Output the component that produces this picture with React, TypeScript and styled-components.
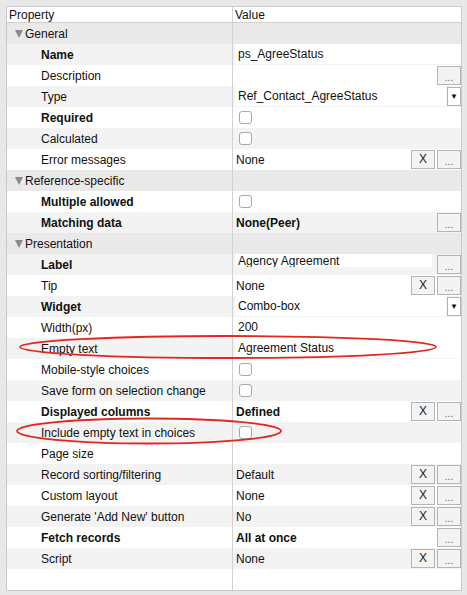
import React from 'react';
import styled, { createGlobalStyle } from 'styled-components';

const GlobalStyle = createGlobalStyle`
  html, body {
    margin: 0;
    padding: 0;
    background: #e8e8e8;
  }
  body {
    font-family: 'Liberation Sans', Arial, sans-serif;
    font-size: 12px;
    color: #111111;
  }
`;

const Page = styled.div`
  position: relative;
  width: 467px;
  height: 595px;
  padding: 6px 0 0 6px;
  box-sizing: border-box;
`;

const Panel = styled.div`
  width: 456px;
  height: 585px;
  box-sizing: border-box;
  border: 1px solid #c9c9c9;
  background: #ffffff;
  display: flex;
  flex-direction: column;
`;

const Line = styled.div<{ $bg?: string; $h?: number }>`
  display: grid;
  grid-template-columns: 226px 1fr;
  height: ${(p) => p.$h ?? 21}px;
  background: ${(p) => p.$bg ?? '#ffffff'};
  flex: none;
`;

const HeadLine = styled(Line)`
  border-bottom: 1px solid #cfcfcf;
`;

const Filler = styled(Line)`
  flex: 1;
  height: auto;
`;

const LeftCell = styled.div<{ $bold?: boolean; $pad?: number }>`
  border-right: 1px solid #d2d2d2;
  padding-left: ${(p) => p.$pad ?? 34}px;
  display: flex;
  align-items: center;
  gap: 2px;
  font-weight: ${(p) => (p.$bold ? 700 : 400)};
  white-space: nowrap;
  overflow: hidden;
`;

const ValueCell = styled.div<{ $pad?: number }>`
  display: flex;
  align-items: center;
  padding-left: ${(p) => p.$pad ?? 0}px;
  min-width: 0;
`;

const ValueText = styled.span<{ $bold?: boolean }>`
  flex: 1;
  padding-left: 3px;
  font-weight: ${(p) => (p.$bold ? 700 : 400)};
  white-space: nowrap;
`;

const Field = styled.div<{ $clipped?: boolean }>`
  flex: 1;
  align-self: ${(p) => (p.$clipped ? 'flex-start' : 'stretch')};
  margin: ${(p) => (p.$clipped ? '0 3px 0 2px' : '0 0 1px 2px')};
  height: ${(p) => (p.$clipped ? '13px' : 'auto')};
  background: #ffffff;
  padding-left: 3px;
  display: flex;
  align-items: ${(p) => (p.$clipped ? 'flex-start' : 'center')};
  line-height: ${(p) => (p.$clipped ? '15px' : '20px')};
  overflow: hidden;
  white-space: nowrap;
`;

const Check = styled.span`
  width: 11px;
  height: 11px;
  margin-left: 6px;
  border: 1px solid #a9a9a9;
  border-radius: 3px;
  background: #ffffff;
`;

const SmallButton = styled.button<{ $dots?: boolean }>`
  width: 24px;
  height: 19px;
  margin-left: 2px;
  padding: 0;
  border: 1px solid #b4b4b4;
  background: #f3f3f3;
  font-family: inherit;
  font-size: ${(p) => (p.$dots ? '10px' : '12px')};
  color: ${(p) => (p.$dots ? '#5a5a7a' : '#222222')};
  line-height: ${(p) => (p.$dots ? '22px' : '17px')};
  text-align: center;
  flex: none;
`;

const SelectArrow = styled.div`
  width: 12px;
  height: 17px;
  margin-left: 1px;
  border: 1px solid #b4b4b4;
  background: #ffffff;
  display: flex;
  align-items: center;
  justify-content: center;
  font-size: 8px;
  color: #111111;
  flex: none;
`;

const Triangle = styled.span`
  width: 0;
  height: 0;
  border-left: 4px solid transparent;
  border-right: 4px solid transparent;
  border-top: 8px solid #8a8a8a;
`;

const Overlay = styled.svg`
  position: absolute;
  left: 0;
  top: 0;
  pointer-events: none;
`;

type Value =
  | { kind: 'none'; more?: boolean }
  | { kind: 'text'; text: string; bold?: boolean; clear?: boolean; more?: boolean }
  | { kind: 'field'; text: string; select?: boolean; more?: boolean; clipped?: boolean }
  | { kind: 'check' };

type Item =
  | { section: string }
  | { label: string; bold?: boolean; value: Value };

const items: Item[] = [
  { section: 'General' },
  { label: 'Name', bold: true, value: { kind: 'field', text: 'ps_AgreeStatus' } },
  { label: 'Description', value: { kind: 'none', more: true } },
  { label: 'Type', value: { kind: 'field', text: 'Ref_Contact_AgreeStatus', select: true } },
  { label: 'Required', bold: true, value: { kind: 'check' } },
  { label: 'Calculated', value: { kind: 'check' } },
  { label: 'Error messages', value: { kind: 'text', text: 'None', clear: true, more: true } },
  { section: 'Reference-specific' },
  { label: 'Multiple allowed', bold: true, value: { kind: 'check' } },
  { label: 'Matching data', bold: true, value: { kind: 'text', text: 'None(Peer)', bold: true, more: true } },
  { section: 'Presentation' },
  { label: 'Label', bold: true, value: { kind: 'field', text: 'Agency Agreement', more: true, clipped: true } },
  { label: 'Tip', value: { kind: 'text', text: 'None', clear: true, more: true } },
  { label: 'Widget', bold: true, value: { kind: 'field', text: 'Combo-box', select: true } },
  { label: 'Width(px)', value: { kind: 'field', text: '200' } },
  { label: 'Empty text', value: { kind: 'field', text: 'Agreement Status' } },
  { label: 'Mobile-style choices', value: { kind: 'check' } },
  { label: 'Save form on selection change', value: { kind: 'check' } },
  { label: 'Displayed columns', bold: true, value: { kind: 'text', text: 'Defined', bold: true, clear: true, more: true } },
  { label: 'Include empty text in choices', value: { kind: 'check' } },
  { label: 'Page size', value: { kind: 'none' } },
  { label: 'Record sorting/filtering', value: { kind: 'text', text: 'Default', clear: true, more: true } },
  { label: 'Custom layout', value: { kind: 'text', text: 'None', clear: true, more: true } },
  { label: "Generate 'Add New' button", value: { kind: 'text', text: 'No', clear: true, more: true } },
  { label: 'Fetch records', bold: true, value: { kind: 'text', text: 'All at once', bold: true, more: true } },
  { label: 'Script', value: { kind: 'text', text: 'None', clear: true, more: true } },
];

const renderValue = (v: Value) => {
  switch (v.kind) {
    case 'check':
      return <Check />;
    case 'none':
      return (
        <>
          <ValueText />
          {v.more && <SmallButton $dots>...</SmallButton>}
        </>
      );
    case 'text':
      return (
        <>
          <ValueText $bold={v.bold}>{v.text}</ValueText>
          {v.clear && <SmallButton>X</SmallButton>}
          {v.more && <SmallButton $dots>...</SmallButton>}
        </>
      );
    case 'field':
      return (
        <>
          <Field $clipped={v.clipped}>{v.text}</Field>
          {v.select && <SelectArrow>▼</SelectArrow>}
          {v.more && <SmallButton $dots>...</SmallButton>}
        </>
      );
  }
};

export default function App() {
  return (
    <Page>
      <GlobalStyle />
      <Panel>
        <HeadLine $h={15}>
          <LeftCell $pad={2}>Property</LeftCell>
          <ValueCell $pad={2}>Value</ValueCell>
        </HeadLine>
        {items.map((item, i) =>
          'section' in item ? (
            <Line key={i} $bg="#e9e9e9">
              <LeftCell $pad={8}>
                <Triangle />
                {item.section}
              </LeftCell>
              <ValueCell />
            </Line>
          ) : (
            <Line key={i} $bg={i % 2 === 1 ? '#f3f3f3' : '#ffffff'}>
              <LeftCell $bold={item.bold}>{item.label}</LeftCell>
              <ValueCell>{renderValue(item.value)}</ValueCell>
            </Line>
          )
        )}
        <Filler>
          <LeftCell />
          <ValueCell />
        </Filler>
      </Panel>
      <Overlay width="467" height="595" viewBox="0 0 467 595">
        <ellipse cx="228" cy="347" rx="208" ry="11" fill="none" stroke="#e4261c" strokeWidth="1.8" />
        <ellipse cx="149" cy="431" rx="132" ry="12.5" fill="none" stroke="#e4261c" strokeWidth="1.8" />
      </Overlay>
    </Page>
  );
}
